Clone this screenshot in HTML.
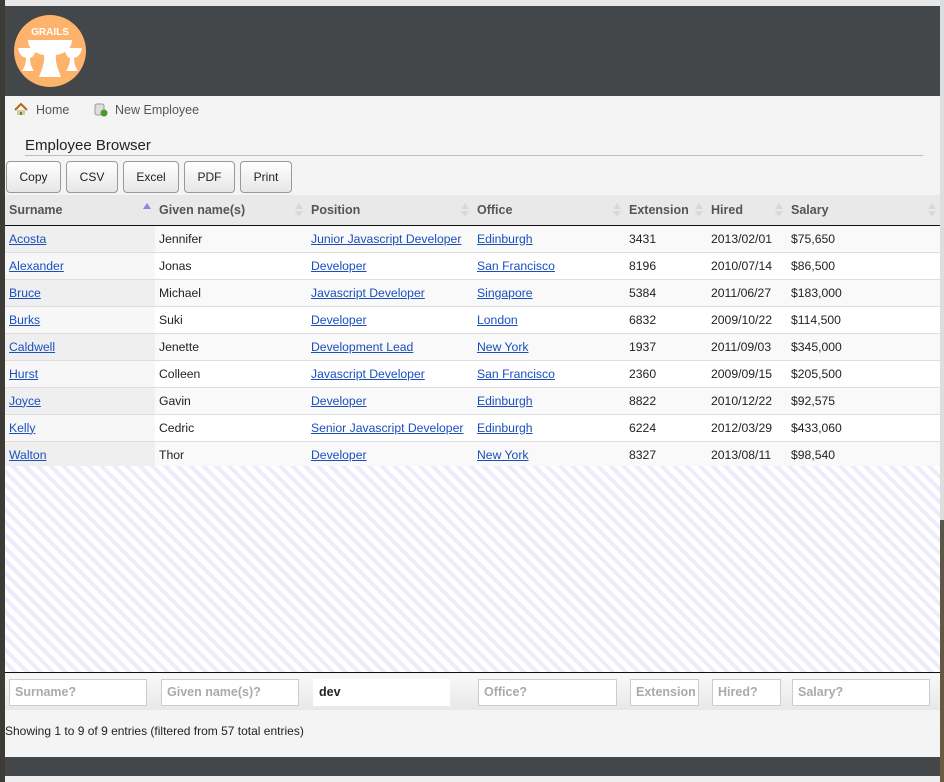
<!DOCTYPE html>
<html><head><style>
*{box-sizing:border-box;margin:0;padding:0}
body{width:944px;height:782px;background:#3d3b36;font-family:"Liberation Sans",sans-serif;font-size:12px;color:#222;position:relative;overflow:hidden}
#right{position:absolute;left:940px;top:0;width:4px;height:782px;background:linear-gradient(#ddd 0,#ddd 520px,#5a5548 520px,#6a5a40 782px)}
#topbar{position:absolute;left:5px;top:0;width:935px;height:6px;background:#e8e8e8}
#header{position:absolute;left:5px;top:6px;width:935px;height:90px;background:#434749}
#page{position:absolute;left:5px;top:96px;width:935px;height:661px;background:#f4f4f4}
#footer{position:absolute;left:5px;top:757px;width:935px;height:19px;background:#434749}
#bottom{position:absolute;left:5px;top:776px;width:935px;height:6px;background:#eee}
.nav{position:absolute;top:7px;color:#555;font-size:12.5px}
h1{position:absolute;left:20px;top:41px;width:898px;font-weight:normal;font-size:15px;color:#222;border-bottom:1px solid #bbb;padding-bottom:1px}
.btn{position:absolute;top:65px;height:32px;border:1px solid #999;border-radius:4px;background:linear-gradient(#fff,#e6e6e6);font-size:12px;text-align:center;line-height:30px;color:#222}
table{position:absolute;left:0;top:99px;width:935px;border-collapse:collapse}
th{height:30px;text-align:left;font-weight:bold;color:#555;background:#e9e9e9;border-bottom:1px solid #111;padding-left:4px;font-size:12.5px;position:relative}
th .s{position:absolute;right:4px;top:8px;width:0;height:0;border-left:4px solid transparent;border-right:4px solid transparent;border-bottom:6px solid #d8d8d8}
th .d{position:absolute;right:4px;top:16px;width:0;height:0;border-left:4px solid transparent;border-right:4px solid transparent;border-top:6px solid #d8d8d8}
td{height:27px;padding-left:4px;border-top:1px solid #ddd;font-size:12.2px}
td a{color:#1a4fbf;text-decoration:underline}
tr.o td{background:#f9f9f9}tr.o td:first-child{background:#efefef}
tr.e td{background:#fff}tr.e td:first-child{background:#f7f7f7}
#stripes{position:absolute;left:0;top:370px;width:935px;height:207px;background:repeating-linear-gradient(45deg,#fff 0,#fff 5px,#ececfc 5px,#ececfc 9px);border-bottom:1px solid #111}
#filters{position:absolute;left:0;top:578px;width:935px;height:36px;background:linear-gradient(#f8f8f8,#e8e8e8)}
.f{position:absolute;top:5px;height:27px;border:1px solid #ccc;background:#fff;color:#aaa;font-weight:bold;font-size:12.5px;padding-left:5px;line-height:25px;overflow:hidden;white-space:nowrap}
#info{position:absolute;left:0;top:628px;font-size:12px;color:#222}
</style></head><body>
<div id="right"></div><div id="topbar"></div>
<div id="header">
<svg style="position:absolute;left:9px;top:9px" width="72" height="72" viewBox="0 0 72 72">
<circle cx="36" cy="36" r="36" fill="#feb36d"/>
<text x="36" y="20" text-anchor="middle" fill="#fff" font-family="Liberation Sans" font-weight="bold" font-size="10">GRAILS</text>
<path d="M14 25 H58 C58 34 50 39 42 40 C41 47 44 54 47 62 H25 C28 54 31 47 30 40 C22 39 14 34 14 25Z" fill="#fff"/>
<path d="M4 33 H21 C22 39 19 42 16 43 C16 49 18 53 20 56 H8 C10 53 12 49 12 43 C8 42 5 39 4 33Z" fill="#fff"/>
<path d="M51 33 H68 C67 39 64 42 60 43 C60 49 62 53 64 56 H52 C54 53 56 49 56 43 C53 42 51 39 51 33Z" fill="#fff"/>
</svg>
</div>
<div id="page">
<svg style="position:absolute;left:9px;top:7px" width="14" height="13"><path d="M1 7 L7 1 L13 7" fill="none" stroke="#b5651d" stroke-width="2"/><rect x="3" y="7" width="8" height="5" fill="#d9c9a0"/><rect x="6" y="9" width="2" height="3" fill="#5a8a2a"/></svg>
<span class="nav" style="left:31px">Home</span>
<svg style="position:absolute;left:89px;top:7px" width="14" height="14"><rect x="1" y="1" width="9" height="11" rx="2" fill="#ddd" stroke="#999"/><circle cx="10" cy="10" r="3.5" fill="#4a9a2a"/></svg>
<span class="nav" style="left:110px">New Employee</span>
<h1>Employee Browser</h1>
<div class="btn" style="left:1px;width:55px">Copy</div>
<div class="btn" style="left:61px;width:52px">CSV</div>
<div class="btn" style="left:118px;width:56px">Excel</div>
<div class="btn" style="left:179px;width:51px">PDF</div>
<div class="btn" style="left:235px;width:52px">Print</div>
<table>
<colgroup><col style="width:150px"><col style="width:152px"><col style="width:166px"><col style="width:152px"><col style="width:82px"><col style="width:80px"><col style="width:153px"></colgroup>
<tr><th>Surname<span class="s" style="border-bottom-color:#8888dd"></span></th><th>Given name(s)<span class="s"></span><span class="d"></span></th><th>Position<span class="s"></span><span class="d"></span></th><th>Office<span class="s"></span><span class="d"></span></th><th>Extension<span class="s"></span><span class="d"></span></th><th>Hired<span class="s"></span><span class="d"></span></th><th>Salary<span class="s"></span><span class="d"></span></th></tr>
<tr class="o"><td><a>Acosta</a></td><td>Jennifer</td><td><a>Junior Javascript Developer</a></td><td><a>Edinburgh</a></td><td>3431</td><td>2013/02/01</td><td>$75,650</td></tr>
<tr class="e"><td><a>Alexander</a></td><td>Jonas</td><td><a>Developer</a></td><td><a>San Francisco</a></td><td>8196</td><td>2010/07/14</td><td>$86,500</td></tr>
<tr class="o"><td><a>Bruce</a></td><td>Michael</td><td><a>Javascript Developer</a></td><td><a>Singapore</a></td><td>5384</td><td>2011/06/27</td><td>$183,000</td></tr>
<tr class="e"><td><a>Burks</a></td><td>Suki</td><td><a>Developer</a></td><td><a>London</a></td><td>6832</td><td>2009/10/22</td><td>$114,500</td></tr>
<tr class="o"><td><a>Caldwell</a></td><td>Jenette</td><td><a>Development Lead</a></td><td><a>New York</a></td><td>1937</td><td>2011/09/03</td><td>$345,000</td></tr>
<tr class="e"><td><a>Hurst</a></td><td>Colleen</td><td><a>Javascript Developer</a></td><td><a>San Francisco</a></td><td>2360</td><td>2009/09/15</td><td>$205,500</td></tr>
<tr class="o"><td><a>Joyce</a></td><td>Gavin</td><td><a>Developer</a></td><td><a>Edinburgh</a></td><td>8822</td><td>2010/12/22</td><td>$92,575</td></tr>
<tr class="e"><td><a>Kelly</a></td><td>Cedric</td><td><a>Senior Javascript Developer</a></td><td><a>Edinburgh</a></td><td>6224</td><td>2012/03/29</td><td>$433,060</td></tr>
<tr class="o"><td><a>Walton</a></td><td>Thor</td><td><a>Developer</a></td><td><a>New York</a></td><td>8327</td><td>2013/08/11</td><td>$98,540</td></tr>
</table>
<div id="stripes"></div>
<div id="filters">
<div class="f" style="left:4px;width:138px">Surname?</div>
<div class="f" style="left:156px;width:138px">Given name(s)?</div>
<div class="f" style="left:308px;width:137px;color:#222;border-color:#fff">dev</div>
<div class="f" style="left:473px;width:139px">Office?</div>
<div class="f" style="left:625px;width:69px">Extension</div>
<div class="f" style="left:707px;width:69px">Hired?</div>
<div class="f" style="left:787px;width:138px">Salary?</div>
</div>
<div id="info">Showing 1 to 9 of 9 entries (filtered from 57 total entries)</div>
</div>
<div id="footer"></div><div id="bottom"></div>
</body></html>
